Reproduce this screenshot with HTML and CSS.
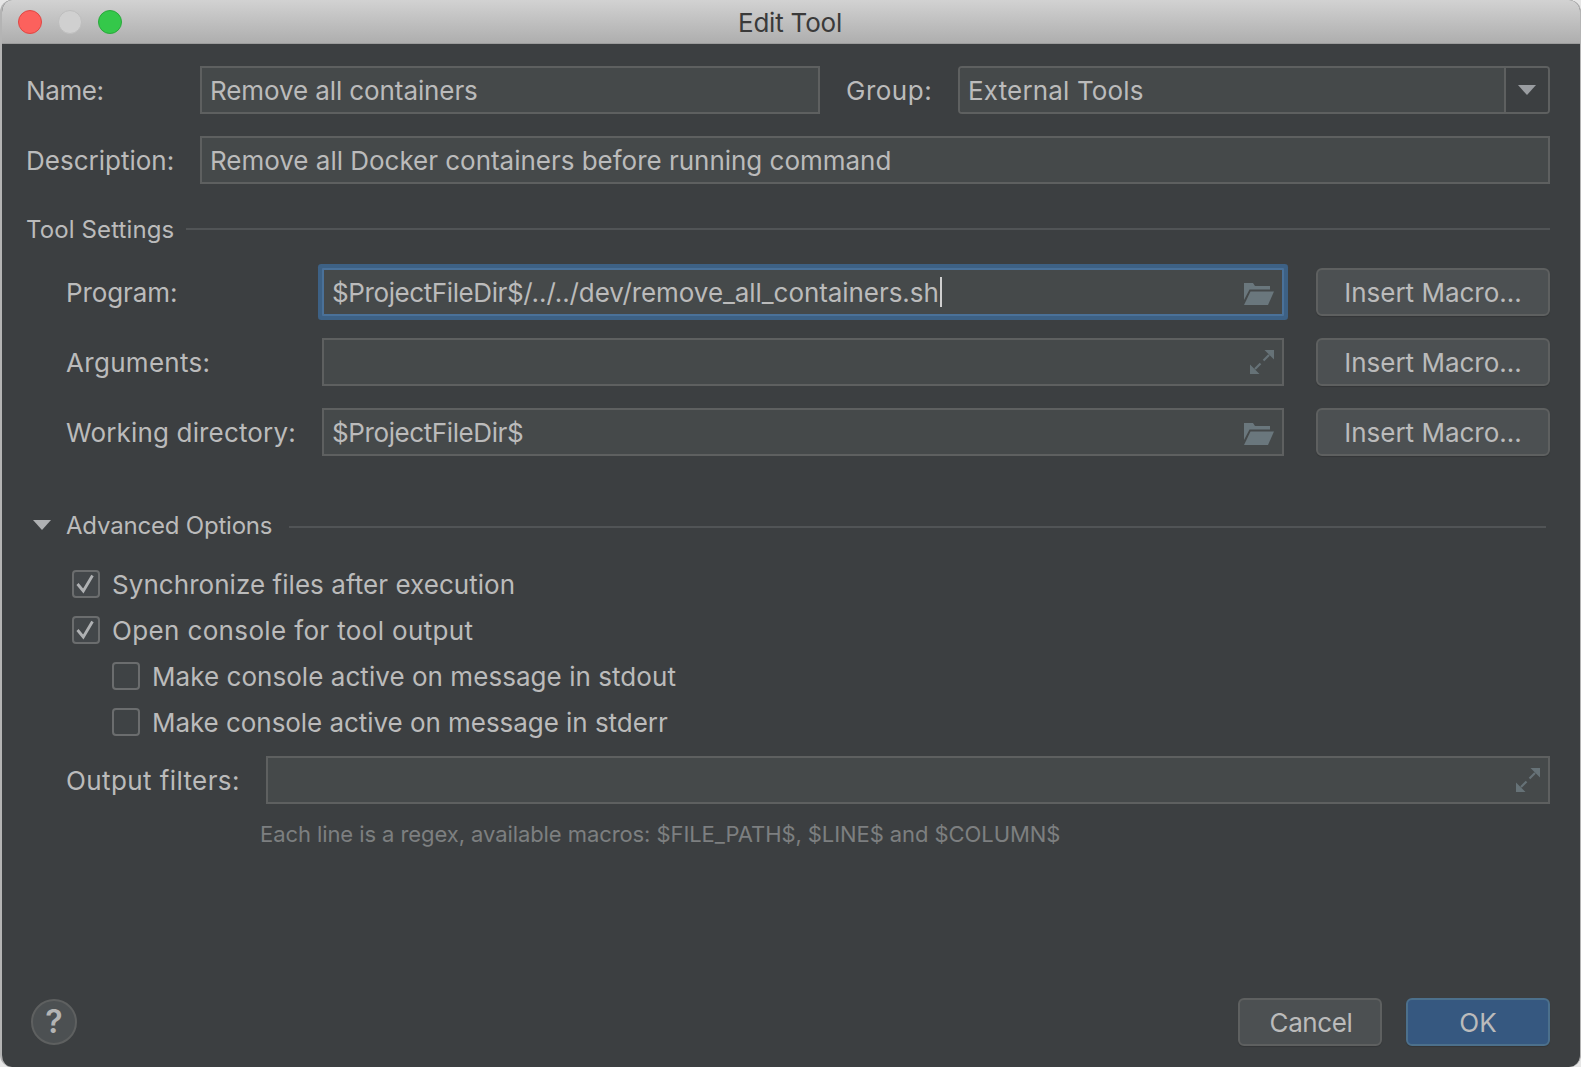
FILE: index.html
```html
<!DOCTYPE html>
<html lang="en">
<head>
<meta charset="utf-8">
<title>Edit Tool</title>
<link rel="stylesheet" href="styles.css">
</head>
<body>
<div class="window">
  <header class="titlebar">
    <div class="lights">
      <span class="light red"></span>
      <span class="light gray"></span>
      <span class="light green"></span>
    </div>
    <div class="title">Edit Tool</div>
  </header>
  <main class="content">
    <div class="row">
      <label class="label name-label sp-n4">Name:</label>
      <div class="field name-field sp-n1">Remove all containers</div>
      <label class="label group-label sp-p5">Group:</label>
      <div class="combo">
        <div class="combo-value sp-p15">External Tools</div>
        <div class="combo-arrow"><svg width="18" height="10" viewBox="0 0 18 10"><path d="M0 0H18L9 10Z" fill="#9a9da1"/></svg></div>
      </div>
    </div>
    <div class="row row-gap">
      <label class="label name-label">Description:</label>
      <div class="field grow desc">Remove all Docker containers before running command</div>
    </div>

    <div class="section section-tool">
      <span class="section-title sp-p1">Tool Settings</span>
      <span class="section-line"></span>
    </div>

    <div class="tool-rows">
      <div class="row">
        <label class="label tool-label sp-n1">Program:</label>
        <div class="field tool-field focused"><span class="path"><span class="macro-var">$ProjectFileDir$</span>/../../dev/remove_all_containers.sh</span><span class="caret"></span>
          <svg class="folder" width="30" height="22" viewBox="0 0 30 22"><path d="M0 0H9L11 3H26V6.500H5.500L0 17Z" fill="#6a777d"/><path d="M6.500 8.500H30L24 22H0Z" fill="#6a777d"/></svg>
        </div>
        <button class="btn macro">Insert Macro...</button>
      </div>
      <div class="row">
        <label class="label tool-label sp-p3">Arguments:</label>
        <div class="field tool-field">
          <svg class="expand" width="24" height="24" viewBox="0 0 24 24"><path d="M14.500 0H24V9.500Z M0 24V14.500L9.500 24Z" fill="#667277"/><path d="M19 5L13.500 10.500M5 19L10.500 13.500" stroke="#667277" stroke-width="2.200"/></svg>
        </div>
        <button class="btn macro">Insert Macro...</button>
      </div>
      <div class="row">
        <label class="label tool-label sp-p15">Working directory:</label>
        <div class="field tool-field"><span class="macro-var">$ProjectFileDir$</span>
          <svg class="folder" width="30" height="22" viewBox="0 0 30 22"><path d="M0 0H9L11 3H26V6.500H5.500L0 17Z" fill="#6a777d"/><path d="M6.500 8.500H30L24 22H0Z" fill="#6a777d"/></svg>
        </div>
        <button class="btn macro">Insert Macro...</button>
      </div>
    </div>

    <div class="section section-adv">
      <svg class="tri" width="18" height="10" viewBox="0 0 18 10"><path d="M0 0H18L9 10Z" fill="#afb1b3"/></svg>
      <span class="section-title adv-title">Advanced Options</span>
      <span class="section-line"></span>
    </div>

    <div class="checks">
      <div class="check">
        <span class="box on"><svg width="24" height="24" viewBox="0 0 24 24"><path d="M3.500 12L9.300 19L18.500 3.500" fill="none" stroke="#afb1b3" stroke-width="2.800"/></svg></span>
        <span class="check-text sp-p05">Synchronize files after execution</span>
      </div>
      <div class="check">
        <span class="box on"><svg width="24" height="24" viewBox="0 0 24 24"><path d="M3.500 12L9.300 19L18.500 3.500" fill="none" stroke="#afb1b3" stroke-width="2.800"/></svg></span>
        <span class="check-text sp-p35">Open console for tool output</span>
      </div>
      <div class="check nested">
        <span class="box"></span>
        <span class="check-text sp-p05">Make console active on message in stdout</span>
      </div>
      <div class="check nested">
        <span class="box"></span>
        <span class="check-text sp-n05">Make console active on message in stderr</span>
      </div>
    </div>

    <div class="row filters">
      <label class="label filters-label sp-p4">Output filters:</label>
      <div class="field grow">
        <svg class="expand" width="24" height="24" viewBox="0 0 24 24"><path d="M14.500 0H24V9.500Z M0 24V14.500L9.500 24Z" fill="#667277"/><path d="M19 5L13.500 10.500M5 19L10.500 13.500" stroke="#667277" stroke-width="2.200"/></svg>
      </div>
    </div>
    <div class="hint">Each line is a regex, available macros: $FILE_PATH$, $LINE$ and $COLUMN$</div>

    <footer class="footer">
      <button class="help">?</button>
      <div class="actions">
        <button class="btn action cancel">Cancel</button>
        <button class="btn action primary">OK</button>
      </div>
    </footer>
  </main>
</div>
</body>
</html>
```

FILE: styles.css
```css
* { box-sizing: border-box; }
html, body { margin: 0; padding: 0; height: 100%; background: #e6e6e6; }
body {
  width: 1581px;
  height: 1067px;
  overflow: hidden;
  font-family: Inter, "Liberation Sans", sans-serif;
  font-size: 26px;
  color: #bbbbbb;
}
.sp-n4 { letter-spacing: -0.4px; }
.sp-n1 { letter-spacing: -0.1px; }
.sp-n05 { letter-spacing: -0.05px; }
.sp-p05 { letter-spacing: 0.05px; }
.sp-p1 { letter-spacing: 0.12px; }
.sp-p15 { letter-spacing: 0.16px; }
.sp-p3 { letter-spacing: 0.3px; }
.sp-p35 { letter-spacing: 0.36px; }
.sp-p4 { letter-spacing: 0.4px; }
.sp-p5 { letter-spacing: 0.5px; }

.window {
  width: 1581px;
  height: 1067px;
  display: flex;
  flex-direction: column;
  border-radius: 12px;
  overflow: hidden;
  background: #3c3f41;
  border-left: 2px solid #b4b4b4;
  border-right: 1px solid #b4b4b4;
}
.titlebar {
  height: 44px;
  flex: none;
  display: flex;
  align-items: center;
  justify-content: center;
  position: relative;
  background: linear-gradient(#d2d2d2, #aeaeae);
  border-bottom: 1px solid #9c9c9c;
}
.lights {
  position: absolute;
  left: 16px;
  top: 10px;
  display: flex;
  gap: 16px;
}
.light { width: 24px; height: 24px; border-radius: 50%; border: 1px solid transparent; }
.red { background: #fc615d; border-color: #df4744; }
.gray { background: #d0d0d0; border-color: #bdbdbd; }
.green { background: #34c84a; border-color: #2aa83c; }
.title {
  color: #3a3a3a;
  font-size: 26px;
  line-height: 44px;
  letter-spacing: -0.2px;
  padding-top: 2px;
  margin-left: -2px;
}

.content {
  flex: 1;
  min-height: 0;
  display: flex;
  flex-direction: column;
  padding: 22px 30px 21px 24px;
}
.row { display: flex; align-items: center; height: 48px; flex: none; }
.row-gap { margin-top: 22px; }
.label { flex: none; white-space: nowrap; }
.name-label { width: 174px; }
.group-label { width: 112px; margin-left: 26px; }
.tool-label { width: 256px; }
.filters-label { width: 200px; }

.field {
  height: 48px;
  display: flex;
  align-items: center;
  border: 2px solid #5e6060;
  background: #45494a;
  padding: 0 8px;
  white-space: nowrap;
  position: relative;
}
.desc { letter-spacing: -0.02px; }
.name-field { width: 620px; flex: none; }
.grow { flex: 1; min-width: 0; }
.combo {
  flex: 1;
  height: 48px;
  display: flex;
  border: 2px solid #5e6060;
  border-radius: 4px;
  overflow: hidden;
}
.combo-value {
  flex: 1;
  display: flex;
  align-items: center;
  padding: 0 8px;
  background: #45494a;
  border-right: 2px solid #5e6060;
}
.combo-arrow {
  width: 42px;
  flex: none;
  display: flex;
  align-items: center;
  justify-content: center;
  background: #3c3f41;
}
.tool-field { width: 962px; flex: none; margin-right: 32px; padding-left: 8px; }
.macro-var { letter-spacing: -0.4px; }
.path { letter-spacing: -0.06px; }
.focused {
  border-color: #4a7199;
  box-shadow: 0 0 0 4px #3d6185;
  border-radius: 1px;
}
.caret { width: 2px; height: 30px; background: #cfcfcf; margin-left: 1px; }
.folder { position: absolute; right: 8px; top: 13px; }
.expand { position: absolute; right: 8px; top: 10px; }

.btn {
  font: inherit;
  color: inherit;
  height: 48px;
  padding: 0;
  border: 2px solid #5e6060;
  border-radius: 6px;
  background: #4c5052;
  box-shadow: 0 1px 1px rgba(0, 0, 0, 0.15);
}
.macro { width: 234px; flex: none; }
.cancel { letter-spacing: -0.4px; padding-left: 2px; }

.section { display: flex; align-items: center; height: 28px; flex: none; font-size: 24px; }
.section-tool { margin-top: 31px; margin-bottom: 25px; }
.section-title { flex: none; white-space: nowrap; }
.adv-title { letter-spacing: -0.2px; padding-bottom: 4px; }
.section-line { flex: 1; height: 2px; background: #515456; margin-left: 12px; }
.section-adv { margin-top: 57px; margin-right: 4px; padding-left: 1px; }
.section-adv .section-line { margin-left: 17px; }
.tri { flex: none; margin-left: 6px; margin-right: 15px; margin-bottom: 4px; }
.tool-rows { display: flex; flex-direction: column; gap: 22px; padding-left: 40px; }
.tool-rows .row { flex: none; }

.checks {
  display: flex;
  flex-direction: column;
  gap: 18px;
  margin-top: 29px;
  padding-left: 46px;
}
.check { display: flex; align-items: center; height: 28px; gap: 12px; }
.nested { padding-left: 40px; }
.box {
  width: 28px;
  height: 28px;
  flex: none;
  display: flex;
  align-items: center;
  justify-content: center;
  border: 2px solid #6b6d6e;
  border-radius: 4px;
  background: #3f4345;
}
.box.on { background: #43474a; }
.check-text { white-space: nowrap; }

.filters { margin-top: 20px; padding-left: 40px; }
.hint {
  margin-top: 15px;
  padding-left: 234px;
  height: 30px;
  line-height: 30px;
  font-size: 22px;
  letter-spacing: -0.08px;
  color: #7d7f80;
  white-space: nowrap;
}

.footer {
  margin-top: auto;
  display: flex;
  align-items: flex-end;
  justify-content: space-between;
}
.help {
  font: inherit;
  font-size: 32px;
  font-weight: 600;
  line-height: 1;
  color: #b4b4b4;
  width: 46px;
  height: 46px;
  padding: 0;
  margin-left: 5px;
  margin-bottom: 1px;
  border-radius: 50%;
  border: 2px solid #5e6060;
  background: #4c5052;
}
.actions { display: flex; gap: 24px; }
.action { width: 144px; }
.primary { background: #365880; border-color: #4c708c; }
```
